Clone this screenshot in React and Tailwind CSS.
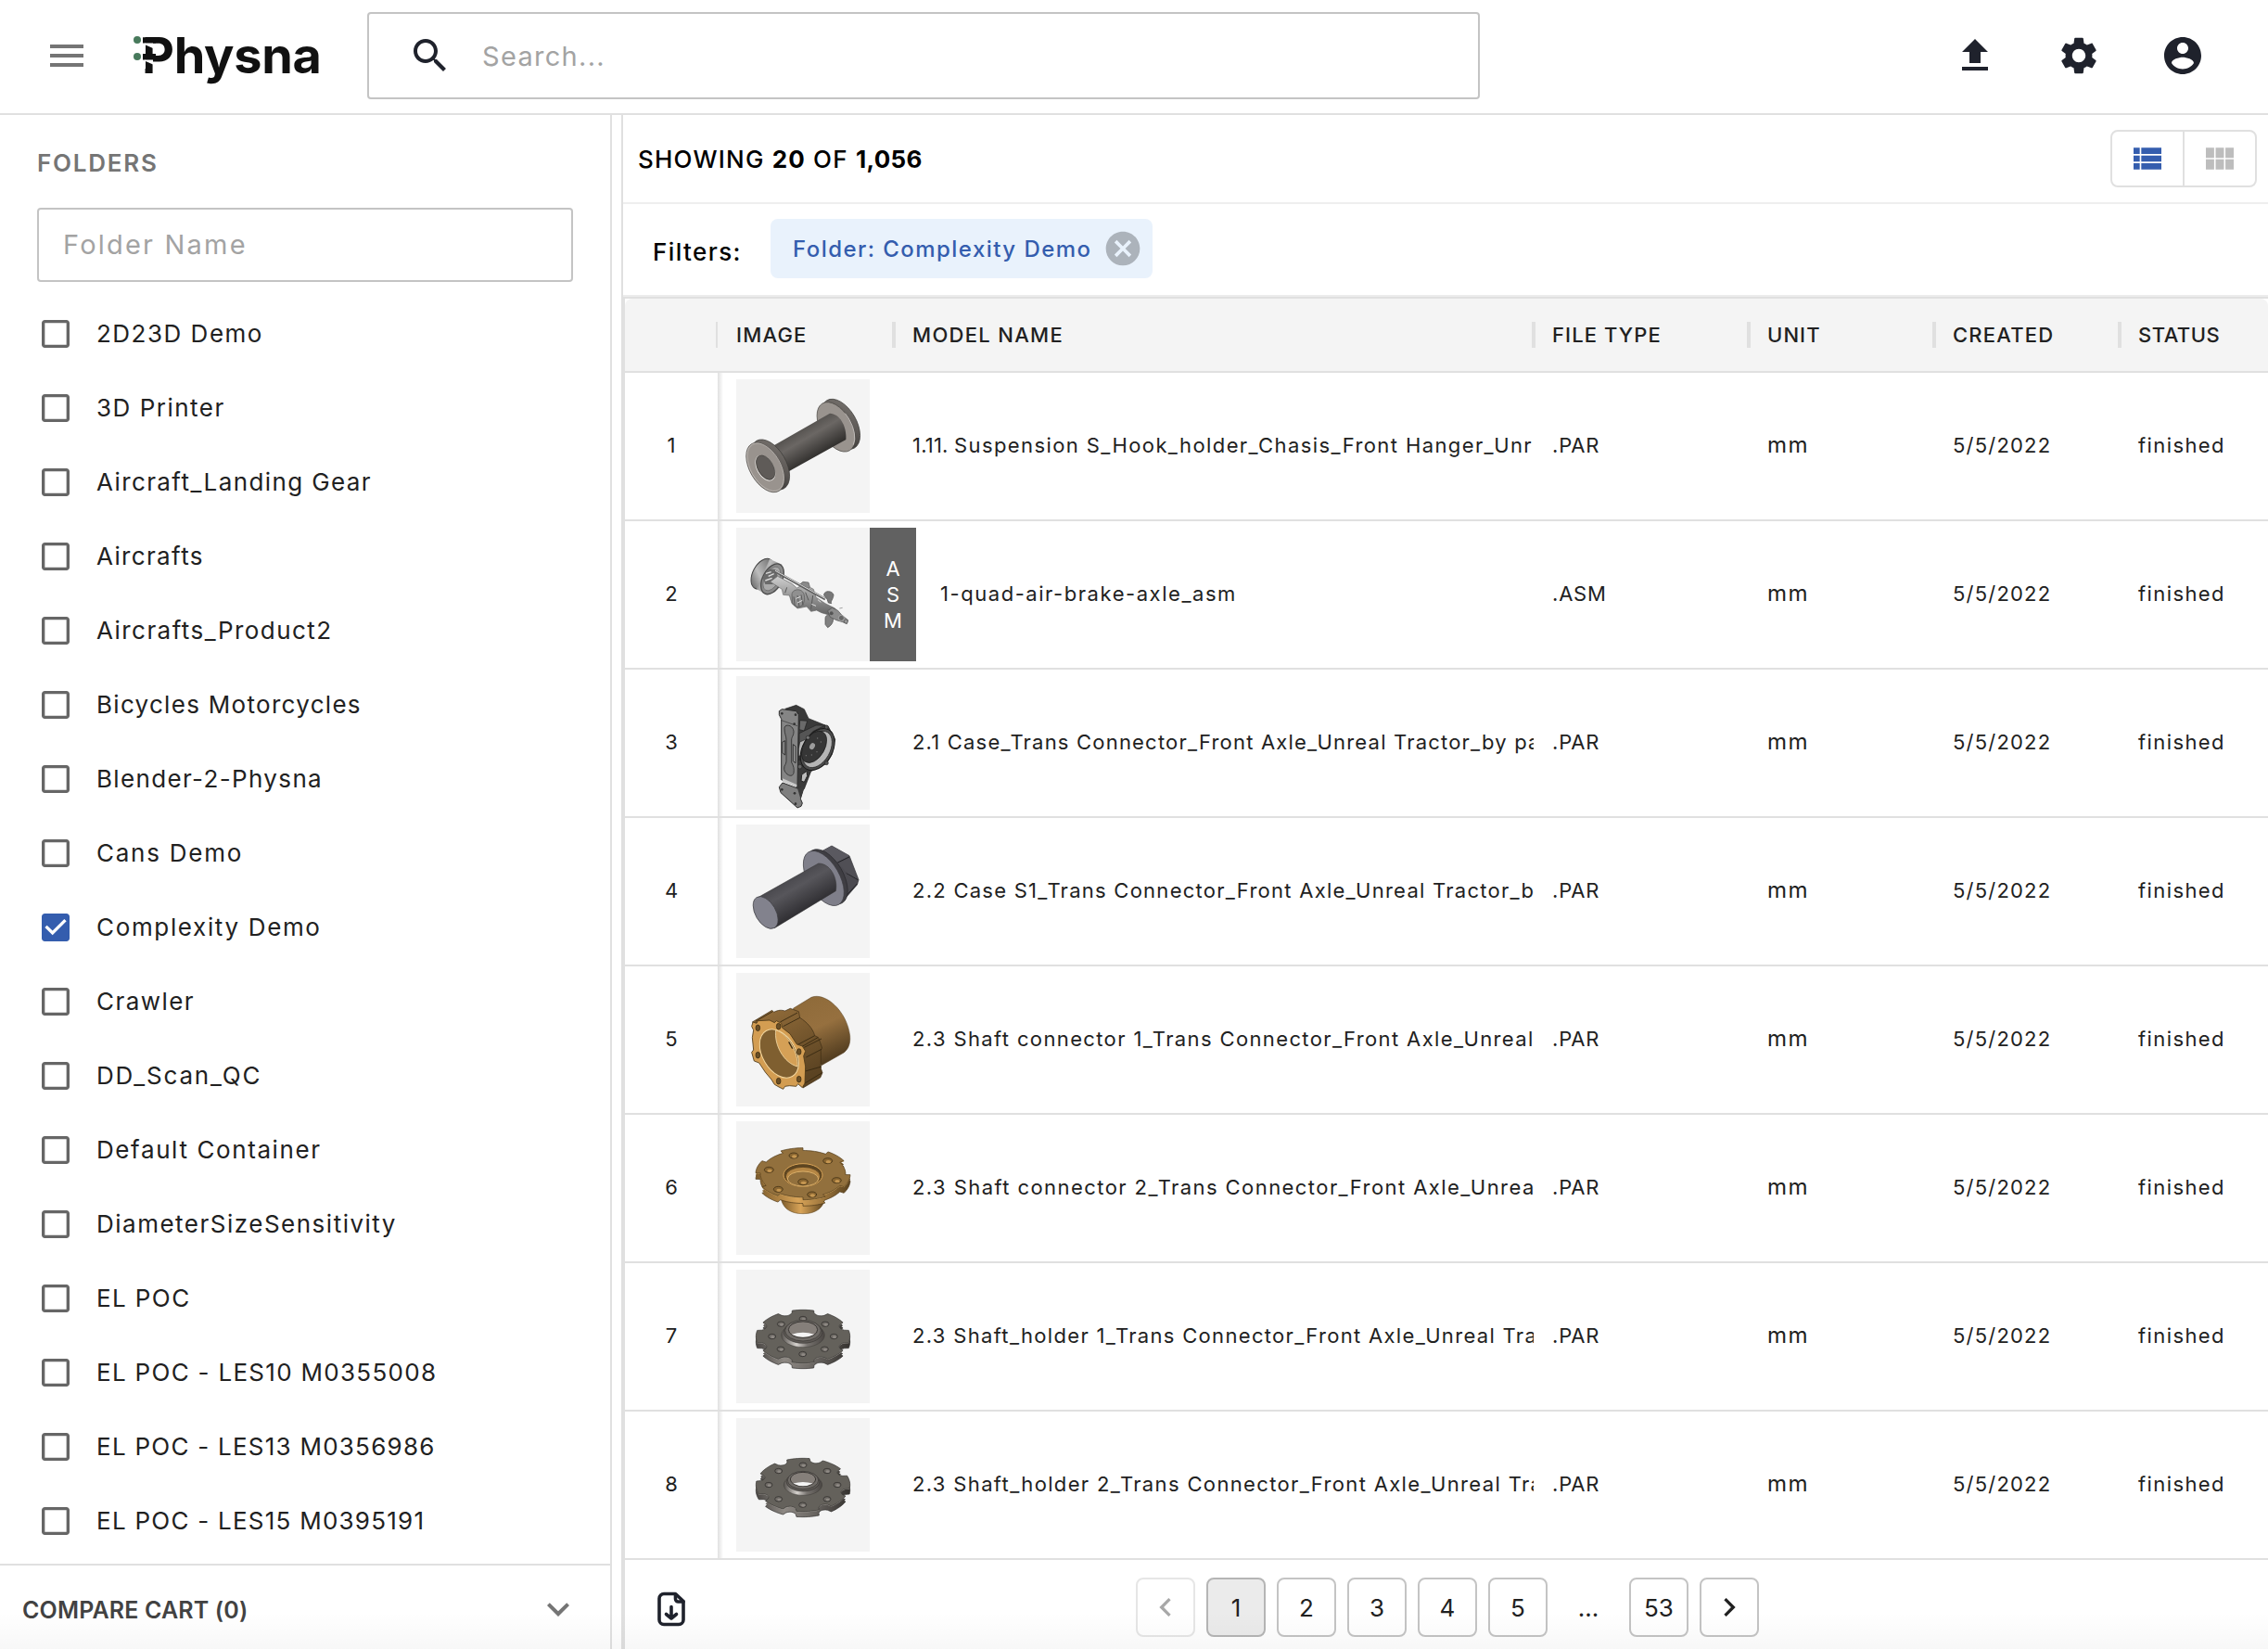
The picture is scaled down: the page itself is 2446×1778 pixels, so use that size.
import React from "react";

const FOLDERS = [
  ["2D23D Demo", "tracking-[1.5px]"],
  ["3D Printer", "tracking-[1.5px]"],
  ["Aircraft_Landing Gear", "tracking-[1.4px]"],
  ["Aircrafts", "tracking-[1.35px]"],
  ["Aircrafts_Product2", "tracking-[1.45px]"],
  ["Bicycles Motorcycles", "tracking-[1.3px]"],
  ["Blender-2-Physna", "tracking-[1.35px]"],
  ["Cans Demo", "tracking-[1.75px]"],
  ["Complexity Demo", "tracking-[1.65px]"],
  ["Crawler", "tracking-[1.45px]"],
  ["DD_Scan_QC", "tracking-[1.85px]"],
  ["Default Container", "tracking-[1.6px]"],
  ["DiameterSizeSensitivity", "tracking-[1.5px]"],
  ["EL POC", "tracking-[1.4px]"],
  ["EL POC - LES10 M0355008", "tracking-[1.3px]"],
  ["EL POC - LES13 M0356986", "tracking-[1.25px]"],
  ["EL POC - LES15 M0395191", "tracking-[1.25px]"],
];

const PATHS = {
  menu: "M3 18h18v-2H3v2zm0-5h18v-2H3v2zm0-7v2h18V6H3z",
  search:
    "M15.5 14h-.79l-.28-.27C15.41 12.59 16 11.11 16 9.5 16 5.91 13.09 3 9.5 3S3 5.91 3 9.5 5.91 16 9.5 16c1.61 0 3.09-.59 4.23-1.57l.27.28v.79l5 4.99L20.49 19l-4.99-5zm-6 0C7.01 14 5 11.99 5 9.5S7.01 5 9.5 5 14 7.01 14 9.5 11.99 14 9.5 14z",
  upload: "M5 20h14v-2H5v2zm0-10h4v6h6v-6h4l-7-7-7 7z",
  settings:
    "M19.14 12.94c.04-.3.06-.61.06-.94 0-.32-.02-.64-.07-.94l2.03-1.58c.18-.14.23-.41.12-.61l-1.92-3.32c-.12-.22-.37-.29-.59-.22l-2.39.96c-.5-.38-1.03-.7-1.62-.94l-.36-2.54c-.04-.24-.24-.41-.48-.41h-3.84c-.24 0-.43.17-.47.41l-.36 2.54c-.59.24-1.13.57-1.62.94l-2.39-.96c-.22-.08-.47 0-.59.22L2.74 8.87c-.12.21-.08.47.12.61l2.03 1.58c-.05.3-.09.63-.09.94s.02.64.07.94l-2.03 1.58c-.18.14-.23.41-.12.61l1.92 3.32c.12.22.37.29.59.22l2.39-.96c.5.38 1.03.7 1.62.94l.36 2.54c.05.24.24.41.48.41h3.84c.24 0 .44-.17.47-.41l.36-2.54c.59-.24 1.13-.56 1.62-.94l2.39.96c.22.08.47 0 .59-.22l1.92-3.32c.12-.22.07-.47-.12-.61l-2.01-1.58zM12 15.6c-1.98 0-3.6-1.62-3.6-3.6s1.62-3.6 3.6-3.6 3.6 1.62 3.6 3.6-1.62 3.6-3.6 3.6z",
  account:
    "M12 2C6.48 2 2 6.48 2 12s4.48 10 10 10 10-4.48 10-10S17.52 2 12 2zm0 3c1.66 0 3 1.34 3 3s-1.34 3-3 3-3-1.34-3-3 1.34-3 3-3zm0 14.2c-2.5 0-4.71-1.28-6-3.22.03-1.99 4-3.08 6-3.08 1.99 0 5.97 1.09 6 3.08-1.29 1.94-3.5 3.22-6 3.22z",
  list: "M3 14h4v-4H3v4zm0 5h4v-4H3v4zM3 9h4V5H3v4zm5 5h13v-4H8v4zm0 5h13v-4H8v4zM8 5v4h13V5H8z",
  module:
    "M14.67 5v6.5H9.33V5h5.34zm1 6.5H21V5h-5.33v6.5zm-1 7.5v-6.5H9.33V19h5.34zm1-6.5V19H21v-6.5h-5.33zm-7.34 0H3V19h5.33v-6.5zm0-1V5H3v6.5h5.33z",
  cancel:
    "M12 2C6.47 2 2 6.47 2 12s4.47 10 10 10 10-4.47 10-10S17.53 2 12 2zm5 13.59L15.59 17 12 13.41 8.41 17 7 15.59 10.59 12 7 8.41 8.41 7 12 10.59 15.59 7 17 8.41 13.41 12 17 15.59z",
  box: "M19 5v14H5V5h14m0-2H5c-1.1 0-2 .9-2 2v14c0 1.1.9 2 2 2h14c1.1 0 2-.9 2-2V5c0-1.1-.9-2-2-2z",
  boxChecked:
    "M19 3H5c-1.11 0-2 .9-2 2v14c0 1.1.89 2 2 2h14c1.11 0 2-.9 2-2V5c0-1.1-.89-2-2-2zm-9 14l-5-5 1.41-1.41L10 14.17l7.59-7.59L19 8l-9 9z",
  more: "M16.59 8.59 12 13.17 7.41 8.59 6 10l6 6 6-6z",
  prev: "M15.41 7.41 14 6l-6 6 6 6 1.41-1.41L10.83 12z",
  next: "M10 6 8.59 7.41 13.17 12l-4.58 4.59L10 18l6-6z",
};

function Icon({ name, className }) {
  return (
    <svg viewBox="0 0 24 24" fill="currentColor" className={"shrink-0 " + className}>
      <path d={PATHS[name]} />
    </svg>
  );
}

// Outline of a notched disc seen at an angle; teeth are centred on phase + k * step.
function gear(n, phase, half, depth, cx, cy, rx, ry, round) {
  const pts = [];
  const step = 360 / n;
  for (let k = 0; k < n; k++) {
    const c = phase + k * step;
    for (let a = -half; a <= half; a += half / 4) pts.push([c + a, 1]);
    const gap = step - 2 * half;
    for (let i = 0; i <= 10; i++) {
      const t = i / 10;
      const d = round ? depth * Math.sqrt(Math.max(0, 1 - (2 * t - 1) ** 2)) : depth;
      pts.push([c + half + gap * t, 1 - d]);
    }
  }
  return (
    "M" +
    pts
      .map(([a, r]) => {
        const q = (a * Math.PI) / 180;
        return (cx + rx * r * Math.cos(q)).toFixed(1) + " " + (cy + ry * r * Math.sin(q)).toFixed(1);
      })
      .join("L") +
    "Z"
  );
}

function Spool() {
  return (
    <svg viewBox="42 27 432 432" className="size-36">
      <defs>
        <linearGradient id="spoolShaft" gradientUnits="userSpaceOnUse" x1="255" y1="185" x2="306" y2="272">
          <stop offset="0" stopColor="#55524f" />
          <stop offset="0.35" stopColor="#6b6764" />
          <stop offset="1" stopColor="#33312f" />
        </linearGradient>
        <linearGradient id="spoolRim" x1="0" y1="0" x2="1" y2="1">
          <stop offset="0" stopColor="#7b7672" />
          <stop offset="0.5" stopColor="#5a5653" />
          <stop offset="1" stopColor="#2e2c2b" />
        </linearGradient>
      </defs>
      <ellipse cx="380" cy="172" rx="89" ry="51" transform="rotate(60 380 172)" fill="url(#spoolRim)" stroke="#3a3836" strokeWidth="2" />
      <ellipse cx="365" cy="181" rx="88" ry="50" transform="rotate(60 365 181)" fill="#99938e" stroke="#4a4744" strokeWidth="2" />
      <ellipse cx="367" cy="180" rx="84" ry="47" transform="rotate(60 367 180)" fill="none" stroke="#d9d5d2" strokeWidth="2" strokeDasharray="110 500" strokeDashoffset="-290" />
      <path d="M160 243 345 137C375 138 400 175 397 222L212 325Z" fill="url(#spoolShaft)" />
      <ellipse cx="152" cy="303" rx="89" ry="51" transform="rotate(60 152 303)" fill="url(#spoolRim)" stroke="#3a3836" strokeWidth="2" />
      <ellipse cx="136" cy="312" rx="88" ry="50" transform="rotate(60 136 312)" fill="#99938e" stroke="#4a4744" strokeWidth="2" />
      <ellipse cx="137" cy="311" rx="85" ry="48" transform="rotate(60 137 311)" fill="none" stroke="#c9c4c0" strokeWidth="2" />
      <ellipse cx="136" cy="314" rx="44" ry="26" transform="rotate(60 136 314)" fill="#5f5b58" stroke="#e4e1de" strokeWidth="3" />
      <ellipse cx="137" cy="312" rx="43" ry="25" transform="rotate(60 137 312)" fill="#5f5b58" stroke="#3b3937" strokeWidth="1.5" />
    </svg>
  );
}

function Axle() {
  return (
    <svg viewBox="42 507 432 432" className="size-36">
      <defs>
        <linearGradient id="drum" x1="0" y1="0" x2="1" y2="0.4">
          <stop offset="0" stopColor="#555" />
          <stop offset="0.5" stopColor="#bdbdbd" />
          <stop offset="1" stopColor="#777" />
        </linearGradient>
        <linearGradient id="beam" x1="0" y1="0" x2="0" y2="1">
          <stop offset="0" stopColor="#cfcfcf" />
          <stop offset="1" stopColor="#606060" />
        </linearGradient>
      </defs>
      <ellipse cx="127" cy="656" rx="53" ry="31" transform="rotate(-62 127 656)" fill="url(#drum)" stroke="#444" strokeWidth="3" />
      <path d="M108 705 150 608 190 626 132 720Z" fill="url(#drum)" />
      <ellipse cx="159" cy="673" rx="53" ry="31" transform="rotate(-62 159 673)" fill="#8a8a8a" stroke="#4d4d4d" strokeWidth="4" />
      <ellipse cx="157" cy="672" rx="42" ry="23" transform="rotate(-62 157 672)" fill="#a9a9a9" stroke="#666" strokeWidth="2" />
      <path d="M128 668 146 640 168 642 176 662 160 690 136 690Z" fill="#6a6a6a" />
      <path d="M138 655 155 650M146 664 164 656M136 678 158 670" stroke="#ddd" strokeWidth="4" />
      <path d="M152 682 176 664 222 688 238 702 262 690 292 706 300 732 330 752 362 768 374 790 352 792 318 782 302 774 284 778 270 762 240 768 222 752 214 726 194 724 190 706Z" fill="url(#beam)" stroke="#666" strokeWidth="2" />
      <path d="M222 722C224 704 258 700 262 726C268 760 240 776 224 750Z" fill="#909090" stroke="#555" strokeWidth="2" />
      <path d="M248 690 258 682 276 684 280 698 270 708Z" fill="#8a8a8a" stroke="#555" strokeWidth="2" />
      <path d="M228 730 232 760M240 726 246 762M252 724 258 758M266 716 276 742M206 700 200 718M290 726 284 770" stroke="#585858" strokeWidth="3" />
      <path d="M168 648 330 738" stroke="#5e5e5e" strokeWidth="8" />
      <path d="M168 646 330 736" stroke="#dadada" strokeWidth="3" />
      <path d="M326 726C324 710 352 708 357 724 356 740 346 744 350 752L340 750 336 738Z" fill="#777" stroke="#4a4a4a" strokeWidth="2" />
      <path d="M330 800C330 786 350 786 356 800 356 816 348 824 338 830L330 820Z" fill="#808080" stroke="#4a4a4a" strokeWidth="2" />
      <path d="M338 776 352 766 370 774 384 790 404 806 400 818 386 812 366 806 346 796Z" fill="#8c8c8c" stroke="#4d4d4d" strokeWidth="2" />
      <circle cx="382" cy="799" r="9" fill="#666" stroke="#bbb" strokeWidth="2" />
      <circle cx="397" cy="810" r="6" fill="#999" stroke="#555" strokeWidth="2" />
      <circle cx="350" cy="784" r="6" fill="#555" />
      <path d="M236 736 250 730M240 750 256 742M286 754 300 760M306 740 316 748" stroke="#e0e0e0" strokeWidth="3" />
      <path d="M376 768 386 766" stroke="#777" strokeWidth="2" />
    </svg>
  );
}

function CasePart() {
  return (
    <svg viewBox="42 27 432 432" className="size-36">
      <path d="M200 133 236 121 262 134 276 164 340 190 362 232 352 280 334 310 284 335 262 392 236 394 236 150Z" fill="#3a3a3a" stroke="#1f1f1f" strokeWidth="2" />
      <path d="M248 170 272 172 262 204 246 200Z" fill="#6a6a6a" stroke="#1c1c1c" strokeWidth="2" />
      <path d="M246 212 300 186 330 186 290 206 262 240 246 300Z" fill="#555" stroke="#222" strokeWidth="2" />
      <path d="M244 262 248 240 266 232 270 244 256 282 244 286Z" fill="#b9b9b9" stroke="#222" strokeWidth="2" />
      <ellipse cx="305" cy="264" rx="73" ry="48" transform="rotate(-60 305 264)" fill="#4b4b4b" stroke="#1a1a1a" strokeWidth="3" />
      <ellipse cx="305" cy="264" rx="64" ry="40" transform="rotate(-60 305 264)" fill="#b5b5b5" stroke="#222" strokeWidth="2" />
      <ellipse cx="294" cy="256" rx="56" ry="34" transform="rotate(-60 294 256)" fill="#363636" stroke="#1a1a1a" strokeWidth="2" />
      <ellipse cx="288" cy="254" rx="11" ry="8" transform="rotate(-60 288 254)" fill="#9c9c9c" />
      <g fill="#777">
        <circle cx="305" cy="228" r="2" />
        <circle cx="316" cy="240" r="2" />
        <circle cx="303" cy="272" r="2" />
        <circle cx="286" cy="282" r="2" />
        <circle cx="268" cy="284" r="2" />
      </g>
      <circle cx="274" cy="226" r="6" fill="#777" stroke="#222" strokeWidth="2" />
      <circle cx="334" cy="192" r="6" fill="#555" stroke="#222" strokeWidth="2" />
      <circle cx="334" cy="308" r="6" fill="#555" stroke="#222" strokeWidth="2" />
      <circle cx="248" cy="320" r="7" fill="#666" stroke="#222" strokeWidth="2" />
      <path d="M254 346 270 334 272 350 262 370 252 366Z" fill="#bcbcbc" stroke="#222" strokeWidth="3" />
      <path d="M181 140 190 134 236 140 244 152 240 385 188 362 188 166 181 152Z" fill="#858585" stroke="#2b2b2b" strokeWidth="3" />
      <path d="M188 170 240 188" stroke="#333" strokeWidth="2" />
      <path d="M198 196C198 180 226 184 228 206 228 222 221 222 221 234L221 306C228 318 230 328 228 340 224 358 200 346 197 328 196 314 204 314 204 302L204 234C204 220 198 214 198 196Z" fill="#777" stroke="#2d2d2d" strokeWidth="2.5" />
      <path d="M192 240 200 236V282L192 276ZM226 248 234 254V308L226 302Z" fill="#999" stroke="#1f1f1f" strokeWidth="2.5" />
      <path d="M192 358 238 378V386L192 368Z" fill="#c9c9c9" />
      <path d="M181 386 192 372 240 390 262 384 250 424 256 438 252 448 240 453 186 404Z" fill="#7f7f7f" stroke="#2b2b2b" strokeWidth="3" />
      <path d="M240 390 264 380 250 424Z" fill="#3c3c3c" />
      <g fill="#333">
        <circle cx="190" cy="148" r="4" />
        <circle cx="234" cy="152" r="4" />
        <circle cx="230" cy="182" r="4" />
        <circle cx="190" cy="394" r="4" />
        <circle cx="231" cy="406" r="4" />
        <circle cx="234" cy="440" r="4" />
      </g>
    </svg>
  );
}

function Bolt() {
  return (
    <svg viewBox="42 507 432 432" className="size-36">
      <defs>
        <linearGradient id="shank" gradientUnits="userSpaceOnUse" x1="215" y1="685" x2="270" y2="780">
          <stop offset="0" stopColor="#4b4a4f" />
          <stop offset="0.3" stopColor="#57565b" />
          <stop offset="1" stopColor="#302f33" />
        </linearGradient>
      </defs>
      <path d="M318 594 351 576 408 608 438 686 433 702 400 740 360 700Z" fill="#4b4a50" stroke="#2a2a2d" strokeWidth="2" />
      <path d="M318 594 351 576 408 608 370 630Z" fill="#5a5960" />
      <path d="M370 630 408 612M398 664 436 686M400 735 434 698" stroke="#222226" strokeWidth="3" fill="none" />
      <path d="M372 634 408 614 436 684 400 664Z" fill="#504f55" />
      <ellipse cx="336" cy="676" rx="98" ry="52" transform="rotate(60 336 676)" fill="#3f3e43" stroke="#29292c" strokeWidth="2" />
      <ellipse cx="325" cy="681" rx="98" ry="51" transform="rotate(60 325 681)" fill="#7f7f8a" stroke="#3c3c41" strokeWidth="2" />
      <path d="M114 742 308 633C345 632 372 680 364 722L166 842Z" fill="url(#shank)" stroke="#333" strokeWidth="1.5" />
      <ellipse cx="137" cy="792" rx="57" ry="33" transform="rotate(60 137 792)" fill="#82828d" stroke="#3a3a3e" strokeWidth="2" />
    </svg>
  );
}

function Connector() {
  return (
    <svg viewBox="42 27 432 432" className="size-36">
      <defs>
        <linearGradient id="brassTube" gradientUnits="userSpaceOnUse" x1="270" y1="110" x2="360" y2="310">
          <stop offset="0" stopColor="#8f6b3a" />
          <stop offset="0.45" stopColor="#96703f" />
          <stop offset="1" stopColor="#4e3a1e" />
        </linearGradient>
        <linearGradient id="brassSide" x1="0" y1="0" x2="0.5" y2="1">
          <stop offset="0" stopColor="#97703c" />
          <stop offset="1" stopColor="#5b4322" />
        </linearGradient>
      </defs>
      <path d="M226 142 285 106C330 88 400 150 410 230 413 262 400 280 385 288L318 326Z" fill="url(#brassTube)" stroke="#5a4427" strokeWidth="1.5" />
      <path d="M94 186 158 148 164 154C178 146 190 147 200 150L217 142 244 152 248 172C270 186 290 206 296 230L308 236 320 270 316 276V336L321 350 314 366 258 399 246 300 180 210Z" fill="url(#brassSide)" stroke="#3c2c14" strokeWidth="2" />
      <path d="M104 184 160 152M184 186 240 156M194 200 248 172M236 262 296 230M262 268 318 240M268 300 318 274M262 346 318 330M264 384 320 350M250 268 306 236" stroke="#33250f" strokeWidth="2.5" />
      <path d="M96 186 108 190 112 182 150 180 166 188 172 182 188 190 190 204 216 224 238 258 256 264 266 280 260 296 266 330 264 384 256 398 242 386 236 394 214 392 200 394 194 403 180 396 166 388 156 372 136 348 116 318 100 312 92 284 98 276 94 236 98 212 92 200Z" fill="#d39d52" stroke="#4b3616" strokeWidth="2.5" />
      <ellipse cx="181" cy="288" rx="85" ry="54" transform="rotate(60 181 288)" fill="#7f5f30" stroke="#f3d79f" strokeWidth="3" />
      <path d="M170 212C164 260 196 318 240 330 244 290 212 224 170 212Z" fill="#d5a056" stroke="#efd7a4" strokeWidth="2.5" />
      <path d="M212 250 224 272" stroke="#3c2c14" strokeWidth="4" />
      <g fill="#6b4f25" stroke="#33250f" strokeWidth="2">
        <ellipse cx="112" cy="205" rx="7" ry="10" />
        <ellipse cx="179" cy="200" rx="7" ry="10" />
        <ellipse cx="245" cy="282" rx="7" ry="10" />
        <ellipse cx="245" cy="371" rx="7" ry="10" />
        <ellipse cx="179" cy="377" rx="7" ry="10" />
        <ellipse cx="112" cy="293" rx="7" ry="10" />
      </g>
    </svg>
  );
}

function BrassDisc() {
  const top = (dy) => gear(6, -104, 14, 0.1, 258, 677 + dy, 153, 84, false);
  return (
    <svg viewBox="42 507 432 432" className="size-36">
      <defs>
        <linearGradient id="brassHub" x1="0" y1="0" x2="1" y2="0">
          <stop offset="0" stopColor="#7a5a2b" />
          <stop offset="0.45" stopColor="#d9a458" />
          <stop offset="1" stopColor="#5a421e" />
        </linearGradient>
      </defs>
      <path d="M186 750C190 792 222 806 258 806 294 806 326 792 330 750Z" fill="url(#brassHub)" stroke="#5a421e" strokeWidth="1.5" />
      <path d={top(20)} fill="url(#brassHub)" stroke="#4b3616" strokeWidth="2" />
      <path d={top(12)} fill="url(#brassHub)" />
      <path d={top(2)} fill="#e0b46c" />
      <path d={top(0)} fill="#92703d" stroke="#4b3616" strokeWidth="2" />
      <ellipse cx="258" cy="681" rx="63" ry="37" fill="#5d4521" stroke="#d9a458" strokeWidth="3" />
      <ellipse cx="258" cy="686" rx="56" ry="31" fill="#b58644" stroke="#4b3616" strokeWidth="2" />
      <ellipse cx="258" cy="693" rx="50" ry="24" fill="#92703d" stroke="#e4b870" strokeWidth="2.5" />
      <g fill="#8a6631" stroke="#33250f" strokeWidth="2">
        <ellipse cx="258" cy="703" rx="16" ry="10" />
        <ellipse cx="228" cy="618" rx="15" ry="9" />
        <ellipse cx="338" cy="635" rx="15" ry="9" />
        <ellipse cx="148" cy="664" rx="15" ry="9" />
        <ellipse cx="367" cy="698" rx="15" ry="9" />
        <ellipse cx="178" cy="727" rx="15" ry="9" />
        <ellipse cx="287" cy="744" rx="15" ry="9" />
      </g>
      <g fill="#c69751">
        <ellipse cx="260" cy="706" rx="9" ry="5" />
        <ellipse cx="230" cy="621" rx="8" ry="5" />
        <ellipse cx="340" cy="638" rx="8" ry="5" />
        <ellipse cx="150" cy="667" rx="8" ry="5" />
        <ellipse cx="369" cy="701" rx="8" ry="5" />
        <ellipse cx="180" cy="730" rx="8" ry="5" />
        <ellipse cx="289" cy="747" rx="8" ry="5" />
      </g>
    </svg>
  );
}

function SteelDisc({ id, phase, holes, collar, half }) {
  const top = (dy) => gear(8, phase, half, 0.15, 258, 243 + dy, 152, 86, true);
  const { rx, ry, cy, bore } = collar;
  return (
    <svg viewBox="42 27 432 432" className="size-36">
      <defs>
        <linearGradient id={id + "Side"} x1="0" y1="0" x2="1" y2="0">
          <stop offset="0" stopColor="#4a4744" />
          <stop offset="0.3" stopColor="#8e8984" />
          <stop offset="0.6" stopColor="#6c6864" />
          <stop offset="1" stopColor="#35322f" />
        </linearGradient>
        <linearGradient id={id + "Collar"} x1="0" y1="0" x2="1" y2="0">
          <stop offset="0" stopColor="#55514d" />
          <stop offset="0.35" stopColor="#d6d2ce" />
          <stop offset="0.6" stopColor="#77736f" />
          <stop offset="1" stopColor="#4a4643" />
        </linearGradient>
      </defs>
      <path d={top(18)} fill={`url(#${id}Side)`} stroke="#2e2c2a" strokeWidth="2" />
      <path d={top(10)} fill={`url(#${id}Side)`} />
      <path d={top(2)} fill="#b3aea9" />
      <path d={top(0)} fill="#64615b" stroke="#34322f" strokeWidth="2" />
      {holes.map(([x, y]) => (
        <g key={x + "-" + y}>
          <ellipse cx={x} cy={y} rx="12" ry="8" fill="#6f6b66" stroke="#262422" strokeWidth="2" />
          <ellipse cx={x + 2} cy={y + 2} rx="6" ry="4" fill="#8f8a85" />
        </g>
      ))}
      <ellipse cx="258" cy={cy + 15} rx={rx + 12} ry={ry + 5} fill={`url(#${id}Collar)`} stroke="#3d3a37" strokeWidth="1.5" />
      <ellipse cx="258" cy={cy + 5} rx={rx + 4} ry={ry + 2} fill="#5d5955" stroke="#2c2a28" strokeWidth="1.5" />
      <ellipse cx="258" cy={cy} rx={rx} ry={ry} fill="#6f6b67" stroke="#383532" strokeWidth="2" />
      <ellipse cx="258" cy={cy - 3} rx={bore} ry={bore * 0.56} fill="#857f7a" stroke="#2c2a28" strokeWidth="2.5" />
      <path
        d={`M${258 - bore * 0.78} ${cy + bore * 0.26}Q258 ${cy + bore * 0.02} ${258 + bore * 0.78} ${cy + bore * 0.26}Q258 ${cy + bore * 0.66} ${258 - bore * 0.78} ${cy + bore * 0.26}Z`}
        fill="#f4f4f4"
      />
    </svg>
  );
}

const HOLES_7 = [[258, 186], [330, 203], [358, 243], [328, 284], [257, 300], [186, 284], [158, 243], [187, 203]];
const HOLES_8 = [[258, 179], [336, 198], [369, 243], [336, 289], [257, 308], [179, 289], [147, 243], [179, 198]];

const ROWS = [
  {
    name: (
      <>
        <span className="tracking-[0.2px]">1.11. </span>Suspension S_Hook_holder_Chasis_Front Hanger_Unr
      </>
    ),
    t: "tracking-[1.4px]",
    type: ".PAR",
    art: <Spool />,
  },
  { name: "1-quad-air-brake-axle_asm", t: "tracking-[1.55px]", type: ".ASM", art: <Axle />, asm: true },
  { name: "2.1 Case_Trans Connector_Front Axle_Unreal Tractor_by pa", t: "tracking-[1.2px]", type: ".PAR", art: <CasePart /> },
  { name: "2.2 Case S1_Trans Connector_Front Axle_Unreal Tractor_b", t: "tracking-[1.26px]", type: ".PAR", art: <Bolt /> },
  { name: "2.3 Shaft connector 1_Trans Connector_Front Axle_Unreal", t: "tracking-[1.37px]", type: ".PAR", art: <Connector /> },
  { name: "2.3 Shaft connector 2_Trans Connector_Front Axle_Unrea", t: "tracking-[1.43px]", type: ".PAR", art: <BrassDisc /> },
  {
    name: "2.3 Shaft_holder 1_Trans Connector_Front Axle_Unreal Tra",
    t: "tracking-[1.32px]",
    type: ".PAR",
    art: <SteelDisc id="discA" phase={-90} half={13.3} holes={HOLES_7} collar={{ rx: 58, ry: 34, cy: 224, bore: 47 }} />,
  },
  {
    name: "2.3 Shaft_holder 2_Trans Connector_Front Axle_Unreal Tra",
    t: "tracking-[1.35px]",
    type: ".PAR",
    art: <SteelDisc id="discB" phase={-96} half={14} holes={HOLES_8} collar={{ rx: 50, ry: 29, cy: 228, bore: 41 }} />,
  },
];

const COLS = "grid grid-cols-[100px_190px_690px_232px_200px_200px_1fr]";

function Logo() {
  return (
    <div className="relative ml-[46px] h-14 w-[212px] shrink-0">
      <span className="absolute top-0 left-[11px] text-[54px] leading-[56px] font-bold tracking-[-0.3px] text-[#111]">Physna</span>
      <svg viewBox="0 0 212 56" className="absolute inset-0 h-14 w-[212px]">
        <circle cx="6" cy="11" r="4" fill="#487a5c" />
        <circle cx="6" cy="29" r="4" fill="#487a5c" />
        <path d="M12 8.300H26V14.500H12ZM12 26H26V32.500H12Z" fill="#111" />
        <path d="M14 14.500H23V20L15 16.500V26H14ZM14 32.500H23V37.500L15 34V42H14Z" fill="#fff" />
      </svg>
    </div>
  );
}

function Header() {
  return (
    <header className="flex h-[124px] shrink-0 items-center border-b-2 border-[#e0e0e0] pr-[68px] pb-0.5 pl-12">
      <Icon name="menu" className="size-12 text-[#757575]" />
      <Logo />
      <div className="ml-[42px] flex h-[94px] w-[1200px] items-center rounded border-2 border-[#c4c4c4] pl-[42px]">
        <Icon name="search" className="size-12 text-[#1f222c]" />
        <span className="ml-8 pt-0.5 text-[29px] tracking-[1.3px] text-[#a3a3a3]">Search...</span>
      </div>
      <div className="ml-auto flex gap-16 text-[#1f222c]">
        <Icon name="upload" className="size-12" />
        <Icon name="settings" className="size-12" />
        <Icon name="account" className="size-12" />
      </div>
    </header>
  );
}

function Sidebar() {
  return (
    <aside className="flex w-[660px] shrink-0 flex-col border-r-2 border-[#e0e0e0]">
      <div className="flex h-[100px] items-center pt-[3px] pl-10 text-[26px] font-semibold tracking-[1.75px] text-[#757575]">FOLDERS</div>
      <div className="ml-10 flex h-20 w-[578px] items-center rounded border-2 border-[#c4c4c4] pl-[26px] text-[29px] tracking-[2.2px] text-[#a3a3a3]">
        Folder Name
      </div>
      <ul className="mt-4 flex-1 overflow-hidden">
        {FOLDERS.map(([name, t]) => (
          <li key={name} className="flex h-20 items-center pl-10">
            {name === "Complexity Demo" ? (
              <Icon name="boxChecked" className="size-10 text-[#345dae]" />
            ) : (
              <Icon name="box" className="size-10 text-[#666]" />
            )}
            <span className={"mb-0.5 ml-6 text-[26px] whitespace-nowrap text-[#212121] " + t}>{name}</span>
          </li>
        ))}
      </ul>
      <div className="flex h-[92px] shrink-0 items-center justify-between border-t-2 border-[#e0e0e0] pt-1 pr-8 pl-6">
        <span className="pt-1 text-[25px] font-semibold tracking-[0.15px] text-[#424242]">COMPARE CART (0)</span>
        <Icon name="more" className="size-12 text-[#757575]" />
      </div>
    </aside>
  );
}

function HeadCell({ children, t, thin }) {
  return (
    <div className="flex items-center">
      <span className={(thin ? "-ml-0.5 mr-5 w-0.5" : "-ml-0.5 mr-[18px] w-1") + " h-[28px] bg-[#e0e0e0]"} />
      <span className={"text-[22px] font-medium whitespace-nowrap text-[#212121] " + t}>{children}</span>
    </div>
  );
}

function Row({ row, index }) {
  return (
    <div className={COLS + " h-40 items-center border-b-2 border-[#e0e0e0] text-[22px] text-[#212121]"}>
      <div className="pb-0.5 text-center">{index + 1}</div>
      <div className="flex h-full items-center">
        <div className="mr-3.5 h-full w-1.5 shrink-0 bg-linear-to-r from-[#e0e0e0] to-white" />
        <div className="size-36 shrink-0 bg-[#f4f4f4]">{row.art}</div>
        {row.asm && (
          <div className="flex h-36 w-[50px] shrink-0 flex-col items-center justify-center bg-[#616161] text-[22px] leading-7 text-white">
            <span>A</span>
            <span>S</span>
            <span>M</span>
          </div>
        )}
      </div>
      <div className={(row.asm ? "pl-[50px] " : "pl-5 ") + "overflow-hidden pb-0.5 whitespace-nowrap " + row.t}>{row.name}</div>
      <div className="pb-0.5 pl-5 tracking-[0.8px]">{row.type}</div>
      <div className="pb-0.5 pl-5 text-[24px] tracking-[1.5px]">mm</div>
      <div className="pb-0.5 pl-5 tracking-[1.2px]">5/5/2022</div>
      <div className="pb-0.5 pl-5 tracking-[1.4px]">finished</div>
    </div>
  );
}

function PageButton({ children, className }) {
  return <div className={"flex size-16 items-center justify-center rounded-lg border-2 " + className}>{children}</div>;
}

function Footer() {
  return (
    <div className="flex flex-1 items-center">
      <svg viewBox="0 0 48 48" className="ml-[26px] mt-3 size-12 shrink-0" fill="none" stroke="#1f222c" strokeWidth="3.6" strokeLinecap="round" strokeLinejoin="round">
        <path d="M28.500 6.500H16a5 5 0 0 0-5 5V34.500a5 5 0 0 0 5 5H32a5 5 0 0 0 5-5V14.500Z" />
        <path d="M28.500 7.500V12a3 3 0 0 0 3 3H37" />
        <path d="M24 20.500V33M18.500 28.500 24 33 29.500 28.500" />
      </svg>
      <div className="ml-[477px] flex items-center gap-3 pt-1.5 text-[26px] text-[#212121]">
        <PageButton className="border-[#e6e6e6] text-[#a8a8a8]">
          <Icon name="prev" className="size-10" />
        </PageButton>
        <PageButton className="border-[#b5b5b5] bg-[#ebebeb]">1</PageButton>
        {[2, 3, 4, 5].map((n) => (
          <PageButton key={n} className="border-[#c4c4c4]">{n}</PageButton>
        ))}
        <span className="w-16 text-center">...</span>
        <PageButton className="border-[#c4c4c4]">53</PageButton>
        <PageButton className="border-[#c4c4c4]">
          <Icon name="next" className="size-10" />
        </PageButton>
      </div>
    </div>
  );
}

function Results() {
  return (
    <main className="ml-2.5 flex min-w-0 flex-1 flex-col border-l-2 border-[#e0e0e0]">
      <div className="flex h-24 shrink-0 items-center border-b-2 border-[#eee] pr-3 pl-4">
        <div className="text-[26px] font-medium tracking-[1.2px] text-black">
          SHOWING <b>20</b> OF <b className="tracking-[0.3px]">1,056</b>
        </div>
        <div className="ml-auto flex h-[62px] w-[158px] rounded-lg border-2 border-[#e0e0e0]">
          <div className="flex flex-1 items-center justify-center border-r-2 border-[#e0e0e0]">
            <Icon name="list" className="size-10 text-[#345dae]" />
          </div>
          <div className="flex flex-1 items-center justify-center">
            <Icon name="module" className="size-10 text-[#bdbdbd]" />
          </div>
        </div>
      </div>
      <div className="flex h-[100px] shrink-0 items-center border-b-2 border-[#ececec] pl-8">
        <span className="w-[127px] pt-1 text-[26px] font-medium tracking-[1.4px] text-black">Filters:</span>
        <div className="mb-[2px] flex h-16 w-[412px] items-center rounded-lg bg-[#e9f2fc] pl-6">
          <span className="pt-0.5 text-[24px] font-medium tracking-[1.45px] whitespace-nowrap text-[#345dae]">Folder: Complexity Demo</span>
          <Icon name="cancel" className="mr-[10px] ml-auto size-11 text-[#acb3bb]" />
        </div>
      </div>
      <div className="flex flex-1 flex-col border-t-2 border-l-2 border-[#e0e0e0]">
        <div className={COLS + " h-20 shrink-0 rounded-t-lg border-b-2 border-[#e0e0e0] bg-[#f4f4f4]"}>
          <div />
          <HeadCell thin t="tracking-[1.2px]">IMAGE</HeadCell>
          <HeadCell t="tracking-[1.3px]">MODEL NAME</HeadCell>
          <HeadCell t="tracking-[1.1px]">FILE TYPE</HeadCell>
          <HeadCell t="tracking-[1.1px]">UNIT</HeadCell>
          <HeadCell t="tracking-[1.2px]">CREATED</HeadCell>
          <HeadCell t="tracking-[0.5px]">STATUS</HeadCell>
        </div>
        {ROWS.map((row, i) => (
          <Row key={i} row={row} index={i} />
        ))}
        <Footer />
      </div>
    </main>
  );
}

export default function App() {
  return (
    <div className="relative flex h-[1778px] w-[2446px] flex-col overflow-hidden bg-white font-['Inter','Liberation_Sans',sans-serif]">
      <Header />
      <div className="flex min-h-0 flex-1">
        <Sidebar />
        <Results />
      </div>
      <div className="pointer-events-none absolute inset-x-0 bottom-0 h-10 bg-linear-to-b from-transparent to-black/[0.03]" />
    </div>
  );
}
